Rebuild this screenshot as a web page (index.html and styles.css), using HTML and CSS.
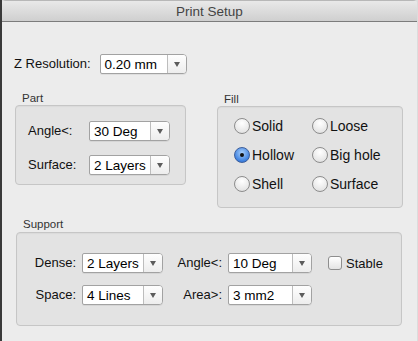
FILE: index.html
```html
<!DOCTYPE html>
<html lang="en">
  <head>
    <meta charset="UTF-8" />
    <meta name="viewport" content="width=device-width, initial-scale=1.0" />
    <link rel="stylesheet" href="styles.css">
    <title>Print Setup</title>
  </head>
  <body>
    <div class="window">
      <div class="titlebar">Print Setup</div>
      <div class="content">
        <div class="z-row">
          <span class="label">Z Resolution:</span>
          <div class="select select-z"><span class="select-value">0.20 mm</span><span class="select-arrow"></span></div>
        </div>

        <div class="groups-row">
          <div class="group group-part">
            <div class="group-title">Part</div>
            <div class="group-box part-box">
              <span class="label label-right">Angle&lt;:</span>
              <div class="select"><span class="select-value">30 Deg</span><span class="select-arrow"></span></div>
              <span class="label label-right">Surface:</span>
              <div class="select"><span class="select-value">2 Layers</span><span class="select-arrow"></span></div>
            </div>
          </div>

          <div class="group group-fill">
            <div class="group-title">Fill</div>
            <div class="group-box fill-box">
              <label class="radio-item"><span class="radio"></span>Solid</label>
              <label class="radio-item"><span class="radio"></span>Loose</label>
              <label class="radio-item"><span class="radio radio-checked"></span>Hollow</label>
              <label class="radio-item"><span class="radio"></span>Big hole</label>
              <label class="radio-item"><span class="radio"></span>Shell</label>
              <label class="radio-item"><span class="radio"></span>Surface</label>
            </div>
          </div>
        </div>

        <div class="group group-support">
          <div class="group-title">Support</div>
          <div class="group-box support-box">
            <span class="label label-right">Dense:</span>
            <div class="select"><span class="select-value">2 Layers</span><span class="select-arrow"></span></div>
            <span class="label label-right">Angle&lt;:</span>
            <div class="select select-wide"><span class="select-value">10 Deg</span><span class="select-arrow"></span></div>
            <label class="check-item"><span class="checkbox"></span>Stable</label>

            <span class="label label-right">Space:</span>
            <div class="select"><span class="select-value">4 Lines</span><span class="select-arrow"></span></div>
            <span class="label label-right">Area&gt;:</span>
            <div class="select select-wide"><span class="select-value">3 mm2</span><span class="select-arrow"></span></div>
          </div>
        </div>
      </div>
    </div>
  </body>
</html>
```

FILE: styles.css
```css
body {
  margin: 0;
  background: linear-gradient(to right, #3a3a3a 2px, #dcdcdc 2px);
  font-family: "Liberation Sans", Arial, sans-serif;
  color: #111;
}

.window {
  width: 415px;
  height: 341px;
  margin-left: 2px;

  background-color: #ececec;
  border-radius: 4px 4px 0 0;
  overflow: hidden;
}

.titlebar {
  height: 22px;
  box-sizing: border-box;

  font-size: 13.5px;
  line-height: 21px;
  text-align: center;
  color: #444;

  background: linear-gradient(#e9e9e9, #cfcfcf);
  border-top: 1px solid #b8b8b8;
  border-bottom: 1px solid #7c7c7c;
}

.content {
  display: flex;
  flex-direction: column;
  padding: 0 12px;
}

.label {
  font-size: 13px;
  line-height: 20px;
  white-space: nowrap;
}

.label-right {
  text-align: right;
}

/* popup button */

.select {
  display: flex;
  width: 81px;
  height: 20px;
  box-sizing: border-box;

  background-color: #fff;
  border: 1px solid #a2a2a2;
  border-radius: 2px 4px 4px 2px;
  box-shadow: 0 1px 0 rgba(0, 0, 0, 0.06);
}

.select-z {
  width: 87px;
}

.select-wide {
  width: 84px;
}

.select-value {
  flex: 1;
  padding-left: 4px;

  font-size: 13.5px;
  line-height: 19px;
  color: #000;
  white-space: nowrap;
}

.select-arrow {
  display: flex;
  justify-content: center;
  align-items: center;
  width: 18px;

  background: linear-gradient(#fefefe, #ededed);
  border-left: 1px solid #bdbdbd;
  border-radius: 0 3px 3px 0;

  &::after {
    content: "";
    border-left: 3.5px solid transparent;
    border-right: 3.5px solid transparent;
    border-top: 5px solid #5c5c5c;
  }
}

.z-row {
  display: flex;
  align-items: center;
  gap: 9px;
  height: 20px;
  margin-top: 32px;
}

/* group boxes */

.groups-row {
  display: flex;
  align-items: flex-start;
  margin-top: 18px;
}

.group-title {
  height: 13px;
  padding-left: 7px;

  font-size: 11.5px;
  line-height: 13px;
  color: #333;
}

.group-box {
  box-sizing: border-box;

  background-color: #e3e3e3;
  border: 1px solid #c6c6c6;
  border-radius: 4px;
  box-shadow: inset 0 1px 1px rgba(0, 0, 0, 0.04);
}

.group-part {
  margin-left: 1px;
}

.part-box {
  display: grid;
  grid-template-columns: 50px 81px;
  grid-auto-rows: 20px;
  column-gap: 11px;
  row-gap: 14px;
  width: 171px;
  height: 80px;
  padding: 15px 0 0 12px;
}

.part-box .label-right {
  text-align: left;
}

.group-fill {
  margin-left: 31px;
  margin-top: 1px;
}

.fill-box {
  display: grid;
  grid-template-columns: 78px 78px;
  grid-auto-rows: 29px;
  width: 186px;
  height: 102px;
  padding: 4px 0 0 16px;
}

.radio-item {
  display: flex;
  align-items: center;
  gap: 2px;

  font-size: 14px;
  white-space: nowrap;
}

.radio {
  width: 16px;
  height: 16px;
  box-sizing: border-box;

  background: radial-gradient(circle at 50% 30%, #ffffff, #dcdcdc);
  border: 1px solid #8c8c8c;
  border-radius: 50%;
}

.radio-checked {
  position: relative;
  background: radial-gradient(circle at 50% 35%, #a9d0fb, #3f82e0 70%, #2c66c2);
  border-color: #3d5f9c;

  &::after {
    content: "";
    position: absolute;
    top: 5px;
    left: 5px;
    width: 4px;
    height: 4px;
    background-color: #111;
    border-radius: 50%;
  }
}

.group-support {
  margin-top: 10px;
  margin-left: 2px;
}

.group-support .group-title {
  height: 14px;
}

.support-box {
  display: grid;
  grid-template-columns: 43px 81px 53px 84px auto;
  grid-auto-rows: 20px;
  column-gap: 6px;
  row-gap: 12px;
  width: 386px;
  height: 94px;
  padding: 20px 0 0 16px;
}

.check-item {
  display: flex;
  align-items: center;
  gap: 4px;
  margin-left: 10px;

  font-size: 13px;
}

.checkbox {
  width: 14px;
  height: 14px;
  box-sizing: border-box;

  background: linear-gradient(#ffffff, #e4e4e4);
  border: 1px solid #8e8e8e;
  border-radius: 3px;
}
```
